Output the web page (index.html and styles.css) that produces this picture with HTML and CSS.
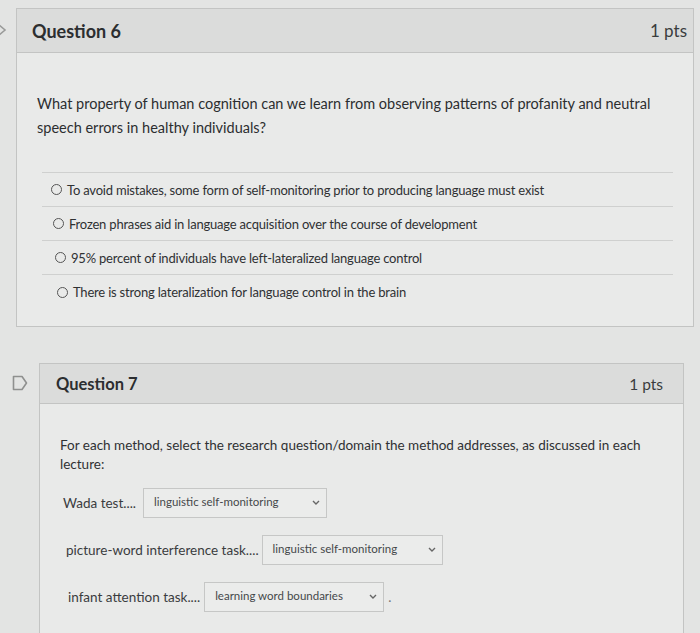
FILE: index.html
```html
<!DOCTYPE html>
<html lang="en">
<head>
<meta charset="utf-8">
<title>Quiz</title>
<link rel="stylesheet" href="styles.css">
</head>
<body>
<div class="quiz">
  <div class="question q6">
    <span class="mark mark-q6" aria-hidden="true">
      <svg width="8" height="12" viewBox="0 0 8 12"><path d="M0 1 L6 6 L0 11" fill="none" stroke="#9a9b9a" stroke-width="1.6"/></svg>
    </span>
    <div class="card card-q6">
      <div class="card-header header-q6">
        <span class="q-name">Question 6</span>
        <span class="q-pts">1 pts</span>
      </div>
      <div class="card-body body-q6">
        <p class="q-text q6-text">What property of human cognition can we learn from observing patterns of profanity and neutral speech errors in healthy individuals?</p>
        <ul class="answers">
          <li class="answer"><span class="radio"></span>To avoid mistakes, some form of self-monitoring prior to producing language must exist</li>
          <li class="answer a2"><span class="radio"></span>Frozen phrases aid in language acquisition over the course of development</li>
          <li class="answer a3"><span class="radio"></span>95% percent of individuals have left-lateralized language control</li>
          <li class="answer a4"><span class="radio"></span>There is strong lateralization for language control in the brain</li>
        </ul>
      </div>
    </div>
  </div>

  <div class="question q7">
    <span class="mark mark-q7" aria-hidden="true">
      <svg width="18" height="16" viewBox="0 0 18 16"><path d="M2.5 1.5 H11 L15.5 8 L11 14.5 H2.5 Z" fill="none" stroke="#8f908f" stroke-width="1.6" stroke-linejoin="round"/></svg>
    </span>
    <div class="card card-q7">
      <div class="card-header header-q7">
        <span class="q-name q7-name">Question 7</span>
        <span class="q-pts q7-pts">1 pts</span>
      </div>
      <div class="card-body body-q7">
        <p class="q-text q7-text">For each method, select the research question/domain the method addresses, as discussed in each lecture:</p>
        <div class="match-row r1">
          <span class="match-label">Wada test....</span>
          <span class="select s1"><span>linguistic self-monitoring</span><svg class="chev" width="8" height="6" viewBox="0 0 8 6"><path d="M1 1 L4 4 L7 1" fill="none" stroke="#666" stroke-width="1.4"/></svg></span>
        </div>
        <div class="match-row r2">
          <span class="match-label">picture-word interference task....</span>
          <span class="select s2"><span>linguistic self-monitoring</span><svg class="chev" width="8" height="6" viewBox="0 0 8 6"><path d="M1 1 L4 4 L7 1" fill="none" stroke="#666" stroke-width="1.4"/></svg></span>
        </div>
        <div class="match-row r3">
          <span class="match-label">infant attention task....</span>
          <span class="select s3"><span>learning word boundaries</span><svg class="chev" width="8" height="6" viewBox="0 0 8 6"><path d="M1 1 L4 4 L7 1" fill="none" stroke="#666" stroke-width="1.4"/></svg></span>
          <span class="dot">.</span>
        </div>
      </div>
    </div>
  </div>
</div>
</body>
</html>
```

FILE: styles.css
```css
* { box-sizing: border-box; }

html, body {
  margin: 0;
  padding: 0;
  background: #e3e4e3;
  font-family: Lato, "Open Sans", sans-serif;
  color: #2f3234;
  overflow: hidden;
}

.quiz {
  display: flex;
  flex-direction: column;
  gap: 36px;
  padding-top: 8px;
}

.question {
  display: flex;
  align-items: flex-start;
}

.mark {
  display: flex;
  align-items: center;
}

.mark-q6 {
  width: 17px;
  height: 44px;
  margin-left: -1px;
}

.mark-q7 {
  width: 39px;
  height: 40px;
  padding-left: 11px;
}

.card {
  border: 1px solid #c3c4c3;
  background: #e9eae9;
}

.card-q6 {
  width: 678px;
}

.card-q7 {
  width: 645px;
  border-bottom: none;
  min-height: 280px;
}

.card-header {
  display: flex;
  align-items: center;
  justify-content: space-between;
  background: #dbdcdb;
  border-bottom: 1px solid #c3c4c3;
}

.header-q6 {
  height: 44px;
  padding: 0 6px 0 15px;
}

.header-q7 {
  height: 40px;
  padding: 0 20px 0 16px;
}

.q-name {
  font-size: 18px;
  font-weight: 700;
  color: #2c2e30;
}

.q7-name {
  font-size: 16.5px;
}

.q-pts {
  font-size: 17px;
  color: #3a3c3e;
}

.q7-pts {
  font-size: 15.5px;
}

.q-text {
  margin: 0;
}

.body-q6 {
  padding: 39px 12px 17px 20px;
}

.q6-text {
  font-size: 14.5px;
  line-height: 24px;
  color: #2c2e30;
}

.answers {
  list-style: none;
  margin: 32px 8px 0 5px;
  padding: 0;
  border-top: 1px solid #cfd0cf;
}

.answer {
  display: flex;
  align-items: center;
  height: 34px;
  padding-left: 9px;
  font-size: 13px;
  color: #2f3133;
  border-bottom: 1px solid #cfd0cf;
  letter-spacing: -0.2px;
}

.answer:last-child { border-bottom: none; }
.a2 { padding-left: 11px; }
.a3 { padding-left: 13px; }
.a4 { padding-left: 15px; }

.radio {
  width: 11px;
  height: 11px;
  border: 1.5px solid #555;
  border-radius: 50%;
  margin-right: 5px;
  flex: none;
}

.body-q7 {
  padding: 32px 20px 20px 20px;
}

.q7-text {
  font-size: 13.5px;
  line-height: 19px;
  color: #2f3133;
}

.match-row {
  display: flex;
  align-items: center;
  height: 30px;
  font-size: 13.5px;
  color: #3a3c3e;
}

.r1 { margin-top: 14px; padding-left: 3px; }
.r2 { margin-top: 17px; padding-left: 6px; }
.r3 { margin-top: 17px; padding-left: 8px; }

.match-label {
  margin-right: 7px;
}

.r2 .match-label { margin-right: 3px; }
.r3 .match-label { margin-right: 4px; }

.select {
  display: flex;
  align-items: center;
  justify-content: space-between;
  height: 30px;
  padding: 0 6px 0 10px;
  border: 1px solid #c6c7c6;
  background: #ebeceb;
  font-size: 11.5px;
  color: #45484a;
}

.select span {
  margin-top: -4px;
}

.s1 { width: 184px; }
.s2 { width: 181px; }
.s3 { width: 180px; }

.chev { flex: none; }

.dot {
  margin-left: 4px;
  color: #777;
}
```
